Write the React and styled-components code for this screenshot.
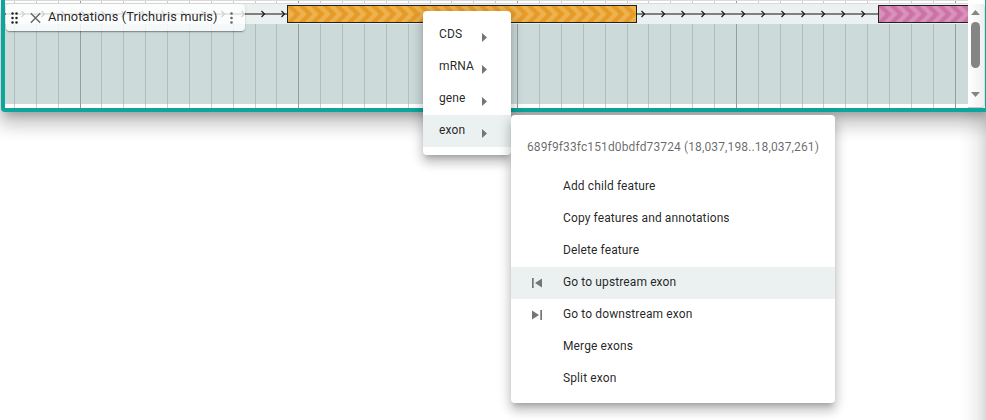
import React from 'react';
import styled, { createGlobalStyle } from 'styled-components';

const Global = createGlobalStyle`
  * { box-sizing: border-box; }
  body { margin: 0; background: #fff; overflow: hidden; font-family: Roboto, sans-serif; color: rgba(0,0,0,.87); }
`;
const Page = styled.main`
  position: relative;
  width: 986px;
  height: 420px;
  overflow: hidden;
  background: linear-gradient(90deg, #fff 958px, #fafafa 968px, #f0f0f0 977px, #dadada 986px);
`;
const View = styled.section`
  width: 988px;
  height: 112px;
  margin-left: 1px;
  border-bottom: 4px solid #0ca69c;
  border-left: 4px solid #0ca69c;
  border-radius: 0 0 4px 4px;
  background: #fff;
  box-shadow: 0 7px 8px -4px rgba(0,0,0,.2), 0 12px 17px 2px rgba(0,0,0,.14), 0 5px 22px 4px rgba(0,0,0,.12);
`;
const TrackRow = styled.div`
  display: flex;
  height: 108px;
`;
const Canvas = styled.svg`
  display: block;
  flex: none;
`;
const Scroll = styled.div`
  width: 17px;
  height: 104px;
  margin-top: 4px;
  padding: 6px 4px 8px 3px;
  display: flex;
  flex-direction: column;
  align-items: center;
  background: linear-gradient(90deg, #fff, #f0f0f0);
  border-right: 1px solid #ddd;
  border-bottom: 1px solid #c8c8c8;
  border-radius: 0 4px 4px 0;
`;
const ViewEdge = styled.div`
  width: 3px;
  background: #0ca69c;
`;
const ScrollArrow = styled.svg`
  display: block;
  flex: none;
`;
const Thumb = styled.div`
  width: 9px;
  height: 46px;
  margin: 7px 0 24px;
  border-radius: 5px;
  background: #858585;
  flex: none;
`;
const TrackLabel = styled.div`
  position: absolute;
  left: 6px;
  top: 4px;
  width: 239px;
  height: 27px;
  display: flex;
  align-items: center;
  padding: 0 8px 0 3px;
  border-radius: 4px;
  background: rgba(255,255,255,.8);
  box-shadow: 0 2px 1px -1px rgba(0,0,0,.2), 0 1px 1px rgba(0,0,0,.14), 0 1px 3px rgba(0,0,0,.12);
`;
const LabelText = styled.span`
  font-size: 12.8px;
  line-height: 20px;
  letter-spacing: .12px;
  white-space: nowrap;
  width: 177px;
  margin-top: -2px;
`;
const LabelIcon = styled.svg`
  flex: none;
  display: block;
`;
const Menu = styled.div`
  position: absolute;
  left: ${p => p.$x}px;
  top: ${p => p.$y}px;
  width: ${p => p.$w}px;
  height: ${p => p.$h}px;
  padding: 8px 0;
  border-radius: 4px;
  background: #fff;
  box-shadow: 0 5px 5px -3px rgba(0,0,0,.2), 0 8px 10px 1px rgba(0,0,0,.14), 0 3px 14px 2px rgba(0,0,0,.12);
`;
const Item = styled.div`
  height: 32px;
  display: flex;
  align-items: center;
  padding: 0 16px;
  font-size: 12px;
  line-height: 18px;
  letter-spacing: .1125px;
  white-space: nowrap;
  background: ${p => (p.$active ? '#ebf1f1' : 'transparent')};
`;
const TypeName = styled.span`
  width: 43px;
  margin-top: -2px;
`;
const SubmenuArrow = styled.svg`
  display: block;
  margin-top: 4px;
`;
const Caption = styled.div`
  height: 48px;
  padding: 0 16px;
  font-size: 12px;
  line-height: 48px;
  letter-spacing: .125px;
  color: rgba(0,0,0,.6);
  white-space: nowrap;
`;
const IconSlot = styled.span`
  width: 36px;
  display: flex;
  padding-left: 5px;
`;
const ItemText = styled.span`
  margin-top: -2px;
`;

const gridLines = Array.from({ length: 45 }, (_, i) => ({ x: Math.round(9.9 + i * 21.88) - 0.5, major: i % 10 === 3 }));
const arrows = Array.from({ length: 44 }, (_, i) => 18 + i * 20);

function ChevronPattern({ id, x, dark, light }) {
  return (
    <pattern id={id} x={x} y="5" width="12" height="18" patternUnits="userSpaceOnUse">
      <rect width="12" height="18" fill={dark} />
      {[-12, 0].map(dx => (
        <path key={dx} transform={`translate(${dx} 0)`} d="M0 0h6l9 9-9 9H0l9-9z" fill={light} />
      ))}
    </pattern>
  );
}

function Track() {
  return (
    <Canvas width="963" height="108" viewBox="0 0 963 108">
      <defs>
        <ChevronPattern id="gold" x={274.7} dark="#e79b27" light="#edb24e" />
        <ChevronPattern id="pink" x={865.7} dark="#cc72a6" light="#d892ba" />
      </defs>
      <rect y="4" width="963" height="20" fill="#ebf0f0" />
      <rect y="24" width="963" height="80" fill="#cddada" />
      {gridLines.map(({ x, major }, i) => (
        <g key={i} stroke={major ? '#92a09f' : '#b0bebd'}>
          <path d={`M${x} 24V104`} />
          <path d={`M${x} 0V3M${x} 104V108`} stroke={major ? '#999' : '#ccc'} />
        </g>
      ))}
      <path d="M0 .5H963M0 3.5H963" stroke="#dadada" />
      <path d="M0 14H963" stroke="#808080" strokeWidth="2" />
      {arrows.map(x => (
        <path key={x} d={`M${x - 1.5} 11l3 3-3 3`} fill="none" stroke="#111" strokeWidth="1.1" />
      ))}
      <rect x="282.5" y="5.5" width="349" height="17" fill="url(#gold)" stroke="#222" />
      <rect x="873.5" y="5.5" width="100" height="17" fill="url(#pink)" stroke="#222" />
    </Canvas>
  );
}

const types = ['CDS', 'mRNA', 'gene', 'exon'];
const actions = [
  { label: 'Add child feature' },
  { label: 'Copy features and annotations' },
  { label: 'Delete feature' },
  { label: 'Go to upstream exon', icon: 'previous', active: true },
  { label: 'Go to downstream exon', icon: 'next' },
  { label: 'Merge exons' },
  { label: 'Split exon' },
];

function SkipIcon({ next }) {
  return (
    <svg width="10" height="10" viewBox="0 0 10 10" fill="#757575">
      {next ? <path d="M0 .5l7 4.5-7 4.5zM8.3 0H10v10H8.3z" /> : <path d="M0 0h1.7v10H0zM10 .5v9L3 5z" />}
    </svg>
  );
}

export default function App() {
  return (
    <Page>
      <Global />
      <View>
        <TrackRow>
          <Track />
          <Scroll>
            <ScrollArrow width="9" height="5" viewBox="0 0 9 5"><path d="M0 5L4.5 0 9 5z" fill="#858585" /></ScrollArrow>
            <Thumb />
            <ScrollArrow width="9" height="5" viewBox="0 0 9 5"><path d="M0 0h9L4.5 5z" fill="#858585" /></ScrollArrow>
          </Scroll>
          <ViewEdge />
        </TrackRow>
      </View>
      <TrackLabel>
        <LabelIcon width="12" height="12" viewBox="0 0 12 12" fill="#222">
          {[1.5, 6, 10.5].map(y => [3.5, 7.5].map(x => <circle key={`${x}-${y}`} cx={x} cy={y} r="1.25" />))}
        </LabelIcon>
        <LabelIcon width="27" height="12" viewBox="0 0 27 12" fill="none" stroke="#666" strokeWidth="1.4">
          <path d="M9.8 1.3l9.4 9.4M19.2 1.3l-9.4 9.4" />
        </LabelIcon>
        <LabelText>Annotations (Trichuris muris)</LabelText>
        <LabelIcon width="12" height="12" viewBox="0 0 12 12" fill="#666">
          {[1.5, 6, 10.5].map(y => <circle key={y} cx="6.5" cy={y} r="1.3" />)}
        </LabelIcon>
      </TrackLabel>
      <Menu $x={423} $y={11} $w={88} $h={144}>
        {types.map(name => (
          <Item key={name} $active={name === 'exon'}>
            <TypeName>{name}</TypeName>
            <SubmenuArrow width="5" height="9" viewBox="0 0 5 9"><path d="M0 0l5 4.5L0 9z" fill="#757575" /></SubmenuArrow>
          </Item>
        ))}
      </Menu>
      <Menu $x={511} $y={115} $w={324} $h={288}>
        <Caption>689f9f33fc151d0bdfd73724 (18,037,198..18,037,261)</Caption>
        {actions.map(({ label, icon, active }) => (
          <Item key={label} $active={active}>
            <IconSlot>{icon && <SkipIcon next={icon === 'next'} />}</IconSlot>
            <ItemText>{label}</ItemText>
          </Item>
        ))}
      </Menu>
    </Page>
  );
}
